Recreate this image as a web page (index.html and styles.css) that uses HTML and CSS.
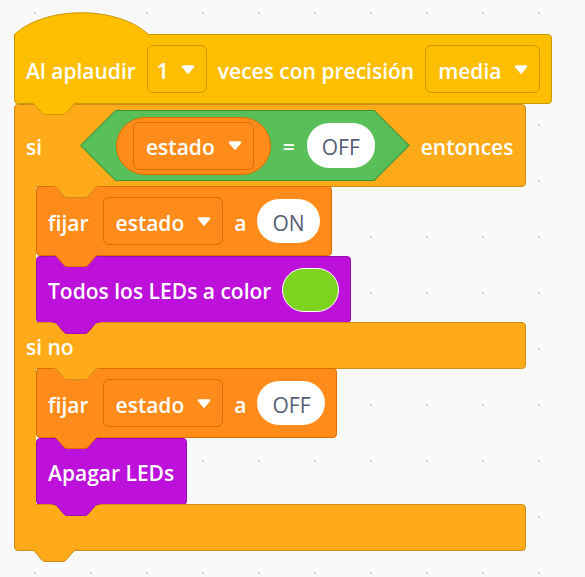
FILE: index.html
```html
<!DOCTYPE html>
<html lang="es">
<head>
<meta charset="utf-8">
<title>Bloques</title>
<link rel="stylesheet" href="styles.css">
</head>
<body>
<main class="canvas">
  <div class="script">
    <div class="hat">
      <svg class="hat-cap" width="136" height="24" viewBox="0 0 136 24"><path class="cap-fill" d="M0.5 24V22.5C31 -6.5 104 -6.5 134.5 22.5V24Z"/><path class="cap-line" d="M0.5 24V22.5C31 -6.5 104 -6.5 134.5 22.5"/></svg>
      <div class="block ev hat-body">
        <span class="lbl">Al aplaudir</span>
        <span class="dd dd-num"><span class="lbl">1</span><svg class="arrow" viewBox="0 0 14 9"><path d="M2 1.5h10L7 7.5Z"/></svg></span>
        <span class="lbl">veces con precisión</span>
        <span class="dd"><span class="lbl">media</span><svg class="arrow" viewBox="0 0 14 9"><path d="M2 1.5h10L7 7.5Z"/></svg></span>
        <svg class="tab" viewBox="0 0 48 13"><path class="tf" d="M0 0c3 0 4 1 6 3l5 6c1 1.5 2.5 2.5 4 2.5h18c1.5 0 3-1 4-2.5l5-6c2-2 3-3 6-3Z"/><path class="ts" d="M0 0c3 0 4 1 6 3l5 6c1 1.5 2.5 2.5 4 2.5h18c1.5 0 3-1 4-2.5l5-6c2-2 3-3 6-3"/></svg>
      </div>
    </div>

    <div class="ifelse ctl">
      <div class="arm arm-top">
        <span class="lbl lbl-si">si</span>
        <div class="hex">
          <div class="var-pill var">
            <span class="dd"><span class="lbl">estado</span><svg class="arrow" viewBox="0 0 14 9"><path d="M2 1.5h10L7 7.5Z"/></svg></span>
          </div>
          <span class="lbl">=</span>
          <span class="txt-pill pill-cond"><span class="lbl">OFF</span></span>
        </div>
        <span class="lbl">entonces</span>
        <svg class="tab tab-in" viewBox="0 0 48 13"><path class="tf" d="M0 0c3 0 4 1 6 3l5 6c1 1.5 2.5 2.5 4 2.5h18c1.5 0 3-1 4-2.5l5-6c2-2 3-3 6-3Z"/><path class="ts" d="M0 0c3 0 4 1 6 3l5 6c1 1.5 2.5 2.5 4 2.5h18c1.5 0 3-1 4-2.5l5-6c2-2 3-3 6-3"/></svg>
      </div>

      <div class="mouth">
        <div class="spine"></div>
        <div class="stack">
          <div class="block var stmt">
            <span class="lbl lbl-fijar">fijar</span>
            <span class="dd"><span class="lbl">estado</span><svg class="arrow" viewBox="0 0 14 9"><path d="M2 1.5h10L7 7.5Z"/></svg></span>
            <span class="lbl">a</span>
            <span class="txt-pill"><span class="lbl">ON</span></span>
            <svg class="tab" viewBox="0 0 48 13"><path class="tf" d="M0 0c3 0 4 1 6 3l5 6c1 1.5 2.5 2.5 4 2.5h18c1.5 0 3-1 4-2.5l5-6c2-2 3-3 6-3Z"/><path class="ts" d="M0 0c3 0 4 1 6 3l5 6c1 1.5 2.5 2.5 4 2.5h18c1.5 0 3-1 4-2.5l5-6c2-2 3-3 6-3"/></svg>
          </div>
          <div class="block led stmt-led">
            <span class="lbl">Todos los LEDs a color</span>
            <span class="swatch"></span>
            <svg class="tab" viewBox="0 0 48 13"><path class="tf" d="M0 0c3 0 4 1 6 3l5 6c1 1.5 2.5 2.5 4 2.5h18c1.5 0 3-1 4-2.5l5-6c2-2 3-3 6-3Z"/><path class="ts" d="M0 0c3 0 4 1 6 3l5 6c1 1.5 2.5 2.5 4 2.5h18c1.5 0 3-1 4-2.5l5-6c2-2 3-3 6-3"/></svg>
          </div>
        </div>
      </div>

      <div class="arm arm-mid">
        <span class="lbl">si no</span>
        <svg class="tab tab-in" viewBox="0 0 48 13"><path class="tf" d="M0 0c3 0 4 1 6 3l5 6c1 1.5 2.5 2.5 4 2.5h18c1.5 0 3-1 4-2.5l5-6c2-2 3-3 6-3Z"/><path class="ts" d="M0 0c3 0 4 1 6 3l5 6c1 1.5 2.5 2.5 4 2.5h18c1.5 0 3-1 4-2.5l5-6c2-2 3-3 6-3"/></svg>
      </div>

      <div class="mouth">
        <div class="spine"></div>
        <div class="stack">
          <div class="block var stmt">
            <span class="lbl lbl-fijar">fijar</span>
            <span class="dd"><span class="lbl">estado</span><svg class="arrow" viewBox="0 0 14 9"><path d="M2 1.5h10L7 7.5Z"/></svg></span>
            <span class="lbl">a</span>
            <span class="txt-pill"><span class="lbl">OFF</span></span>
            <svg class="tab" viewBox="0 0 48 13"><path class="tf" d="M0 0c3 0 4 1 6 3l5 6c1 1.5 2.5 2.5 4 2.5h18c1.5 0 3-1 4-2.5l5-6c2-2 3-3 6-3Z"/><path class="ts" d="M0 0c3 0 4 1 6 3l5 6c1 1.5 2.5 2.5 4 2.5h18c1.5 0 3-1 4-2.5l5-6c2-2 3-3 6-3"/></svg>
          </div>
          <div class="block led stmt-led stmt-off">
            <span class="lbl">Apagar LEDs</span>
            <svg class="tab" viewBox="0 0 48 13"><path class="tf" d="M0 0c3 0 4 1 6 3l5 6c1 1.5 2.5 2.5 4 2.5h18c1.5 0 3-1 4-2.5l5-6c2-2 3-3 6-3Z"/><path class="ts" d="M0 0c3 0 4 1 6 3l5 6c1 1.5 2.5 2.5 4 2.5h18c1.5 0 3-1 4-2.5l5-6c2-2 3-3 6-3"/></svg>
          </div>
        </div>
      </div>

      <div class="arm arm-bot">
        <svg class="tab" viewBox="0 0 48 13"><path class="tf" d="M0 0c3 0 4 1 6 3l5 6c1 1.5 2.5 2.5 4 2.5h18c1.5 0 3-1 4-2.5l5-6c2-2 3-3 6-3Z"/><path class="ts" d="M0 0c3 0 4 1 6 3l5 6c1 1.5 2.5 2.5 4 2.5h18c1.5 0 3-1 4-2.5l5-6c2-2 3-3 6-3"/></svg>
      </div>
    </div>
  </div>
</main>
</body>
</html>
```

FILE: styles.css
```css
html, body {
  margin: 0;
  padding: 0;
}

body {
  font-family: "Open Sans", "Noto Sans", "DejaVu Sans", sans-serif;
}

.canvas {
  box-sizing: border-box;
  min-height: 577px;
  padding: 12px 0 0 14px;
  background-color: #f9f9f9;
  background-image: radial-gradient(circle, #d5d5d5 0, #d5d5d5 1px, rgba(213, 213, 213, 0) 1.6px);
  background-size: 56px 56px;
  background-position: 7px 41px;
}

.script {
  display: flex;
  flex-direction: column;
  align-items: flex-start;
}

/* colour families */
.ev  { --c: #ffbf00; --b: #cc9900; }
.ctl { --c: #ffab19; --b: #cf8b17; }
.var { --c: #ff8c1a; --b: #db6e00; }
.led { --c: #bd10db; --b: #9b0cb4; }

.lbl {
  display: block;
  white-space: nowrap;
  line-height: 1;
  padding-top: 4px;
}

/* hat */
.hat {
  display: flex;
  flex-direction: column;
  align-items: flex-start;
}

.hat-cap {
  display: block;
  position: relative;
  z-index: 5;
  margin-bottom: -2px;
}

.cap-fill { fill: #ffbf00; }
.cap-line { fill: none; stroke: #cc9900; stroke-width: 1; }

.block {
  position: relative;
  box-sizing: border-box;
  display: flex;
  align-items: center;
  gap: 11px;
  background: var(--c);
  border: 1px solid var(--b);
  border-radius: 4px;
  color: #fff;
  font-size: 21px;
  font-weight: 600;
}

.hat-body {
  height: 70px;
  padding: 0 11px;
  border-top-left-radius: 0;
}

/* dropdown field */
.dd {
  display: inline-flex;
  align-items: center;
  gap: 13px;
  height: 48px;
  box-sizing: border-box;
  padding: 0 11px 0 12px;
  border: 1px solid var(--b);
  border-radius: 6px;
  background: var(--c);
  white-space: nowrap;
}

.dd-num {
  padding-left: 9px;
  gap: 12px;
}

.arrow {
  width: 14px;
  height: 9px;
  display: block;
}

.arrow path {
  fill: #fff;
  stroke: #fff;
  stroke-width: 2.4;
  stroke-linejoin: round;
}

/* connection tabs */
.tab {
  position: absolute;
  top: 100%;
  left: 15px;
  width: 48px;
  height: 13px;
  overflow: visible;
  z-index: 10;
}

.tab-in { left: 37px; }

.tf { fill: var(--c); }
.ts { fill: none; stroke: var(--b); stroke-width: 1; }

/* if / else block */
.ifelse {
  width: 512px;
  display: flex;
  flex-direction: column;
  color: #fff;
  font-size: 21px;
  font-weight: 600;
}

.arm {
  position: relative;
  box-sizing: border-box;
  display: flex;
  align-items: center;
  gap: 11px;
  padding-left: 11px;
  background: var(--c);
  border: 1px solid var(--b);
}

.arm-top {
  height: 83px;
  border-radius: 4px 4px 4px 0;
}

.arm-mid {
  height: 47px;
  margin-top: -1px;
  border-radius: 0 4px 4px 0;
}

.arm-bot {
  height: 47px;
  margin-top: -1px;
  border-radius: 0 4px 4px 4px;
}

.lbl-si {
  min-width: 43px;
}

.mouth {
  display: flex;
  margin-top: -1px;
}

.spine {
  position: relative;
  z-index: 1;
  width: 22px;
  flex: none;
  box-sizing: border-box;
  background: var(--c);
  border-left: 1px solid var(--b);
}

.stack {
  display: flex;
  flex-direction: column;
  align-items: flex-start;
}

.stmt {
  height: 70px;
  padding: 0 11px;
}

.lbl-fijar {
  margin-right: 3px;
}

.stmt-led {
  height: 67px;
  padding: 0 11px 0 11px;
}

.stmt-off {
  padding-right: 12px;
}

/* boolean condition */
.hex {
  position: relative;
  display: flex;
  align-items: center;
  gap: 12px;
  height: 71px;
  box-sizing: border-box;
  padding: 0 35px 0 36px;
  background: #389438;
  clip-path: polygon(35.5px 0, calc(100% - 35.5px) 0, 100% 50%, calc(100% - 35.5px) 100%, 35.5px 100%, 0 50%);
}

.hex::before {
  content: "";
  position: absolute;
  inset: 1px;
  z-index: -1;
  background: #59c059;
  clip-path: polygon(34.9px 0, calc(100% - 34.9px) 0, calc(100% - 0.4px) 50%, calc(100% - 34.9px) 100%, 34.9px 100%, 0.4px 50%);
}

.var-pill {
  display: flex;
  align-items: center;
  height: 58px;
  box-sizing: border-box;
  padding: 0 16px 0 16px;
  background: var(--c);
  border: 1px solid var(--b);
  border-radius: 29px;
}

.txt-pill {
  display: inline-flex;
  align-items: center;
  height: 44px;
  box-sizing: border-box;
  padding: 0 15px;
  border-radius: 22px;
  background: #fff;
  color: #575e75;
  font-weight: 500;
}

.pill-cond {
  height: 45px;
}

.swatch {
  width: 57px;
  height: 44px;
  box-sizing: border-box;
  border-radius: 22px;
  background: #7ed321;
  border: 1px solid #fff;
}
```
